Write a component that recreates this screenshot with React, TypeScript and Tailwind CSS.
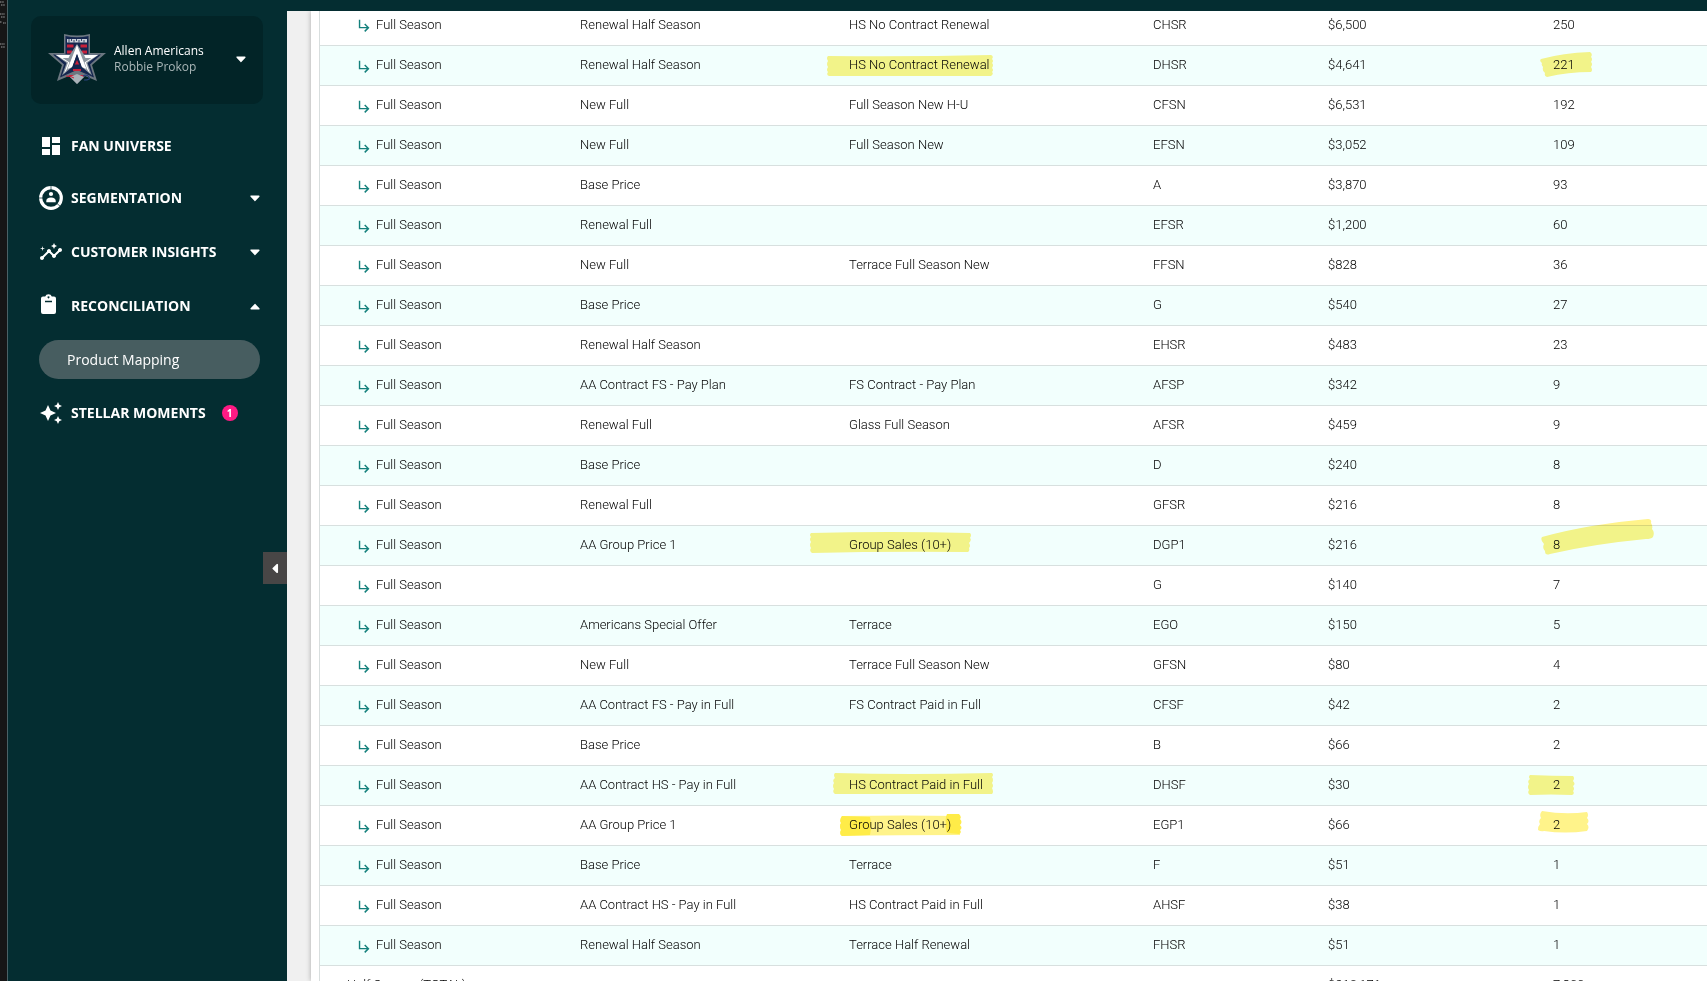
import React from "react";
import {
  MdAutoAwesome,
  MdDashboard,
  MdInsights,
  MdSubdirectoryArrowRight,
} from "react-icons/md";

type Stroke = { d: string; color?: string };
type Row = {
  type: string;
  name: string;
  code: string;
  revenue: string;
  count: string;
  nameMark?: Stroke[];
  countMark?: Stroke[];
};

const YELLOW = "#fff38a";
const DEEP = "#ffec48";

const row = (
  type: string,
  name: string,
  code: string,
  revenue: string,
  count: string,
  nameMark?: Stroke[],
  countMark?: Stroke[],
): Row => ({ type, name, code, revenue, count, nameMark, countMark });

const rows: Row[] = [
  row("Renewal Half Season", "HS No Contract Renewal", "CHSR", "$6,500", "250"),
  row(
    "Renewal Half Season",
    "HS No Contract Renewal",
    "DHSR",
    "$4,641",
    "221",
    [{ d: "M-21 10 Q60 11 142 9 Q145 10 143 13 Q145 15 143 17 Q145 19 143 22 Q145 24 143 26 Q145 28 142 30 Q60 30 -20 30 Q-23 29 -21 26 Q-23 24 -21 21 Q-23 18 -21 15 Q-23 12 -21 10Z" }],
    [{ d: "M-12 13 Q10 7 37 6 Q40 8 38 11 Q40 13 38 16 Q40 18 38 21 Q40 24 38 26 Q15 26 -6 31 Q-9 30 -8 27 Q-11 25 -10 21 Q-12 19 -11 17 Q-14 15 -12 13Z" }],
  ),
  row("New Full", "Full Season New H-U", "CFSN", "$6,531", "192"),
  row("New Full", "Full Season New", "EFSN", "$3,052", "109"),
  row("Base Price", "", "A", "$3,870", "93"),
  row("Renewal Full", "", "EFSR", "$1,200", "60"),
  row("New Full", "Terrace Full Season New", "FFSN", "$828", "36"),
  row("Base Price", "", "G", "$540", "27"),
  row("Renewal Half Season", "", "EHSR", "$483", "23"),
  row("AA Contract FS - Pay Plan", "FS Contract - Pay Plan", "AFSP", "$342", "9"),
  row("Renewal Full", "Glass Full Season", "AFSR", "$459", "9"),
  row("Base Price", "", "D", "$240", "8"),
  row("Renewal Full", "", "GFSR", "$216", "8"),
  row(
    "AA Group Price 1",
    "Group Sales (10+)",
    "DGP1",
    "$216",
    "8",
    [{ d: "M-38 7 Q40 5 121 7 Q123 9 121 12 Q123 14 120 17 Q122 20 120 22 Q121 25 119 26 Q40 25 -37 27 Q-40 25 -38 22 Q-40 19 -38 16 Q-40 13 -38 11 Q-40 9 -38 7Z" }],
    [{ d: "M-11 11 Q36 -2 95 -7 Q99 -7 98 -3 Q100 0 99 3 Q102 6 100 11 Q98 13 93 13 Q40 18 -3 28 Q-8 30 -8 25 Q-11 22 -9 18 Q-13 14 -11 11Z" }],
  ),
  row("", "", "G", "$140", "7"),
  row("Americans Special Offer", "Terrace", "EGO", "$150", "5"),
  row("New Full", "Terrace Full Season New", "GFSN", "$80", "4"),
  row("AA Contract FS - Pay in Full", "FS Contract Paid in Full", "CFSF", "$42", "2"),
  row("Base Price", "", "B", "$66", "2"),
  row(
    "AA Contract HS - Pay in Full",
    "HS Contract Paid in Full",
    "DHSF",
    "$30",
    "2",
    [{ d: "M-14 7 Q60 9 143 7 Q145 9 143 11 Q145 14 143 17 Q145 20 143 22 Q145 26 143 28 Q60 28 -14 28 Q-17 26 -15 23 Q-17 20 -15 17 Q-17 14 -14 12 Q-16 9 -14 7Z" }],
    [{ d: "M-23 9 Q0 10 20 10 Q22 12 20 15 Q23 18 20 20 Q22 23 20 25 Q22 28 19 29 Q-2 28 -23 29 Q-26 27 -24 24 Q-26 21 -24 18 Q-26 15 -23 13 Q-25 11 -23 9Z" }],
  ),
  row(
    "AA Group Price 1",
    "Group Sales (10+)",
    "EGP1",
    "$66",
    "2",
    [
      { d: "M-7 10 Q60 9 110 10 L111 29 Q50 29 -7 30 Q-10 28 -8 24 Q-10 20 -8 17 Q-10 14 -7 10Z" },
      { d: "M-7 10 L21 11 Q23 18 21 29 L-7 30 Q-10 28 -8 24 Q-10 20 -8 17 Q-10 14 -7 10Z", color: DEEP },
      { d: "M98 8 L110 8 Q113 11 111 13 Q114 16 111 19 Q114 22 111 24 Q113 27 110 28 L98 27 Q96 23 97 18 Q96 12 98 8Z", color: DEEP },
    ],
    [{ d: "M-11 5 Q12 9 34 6 Q36 9 34 12 Q37 15 34 18 Q37 21 34 25 Q12 28 -9 25 Q-12 26 -15 24 Q-15 20 -13 18 Q-15 15 -12 12 Q-14 8 -11 5Z" }],
  ),
  row("Base Price", "Terrace", "F", "$51", "1"),
  row("AA Contract HS - Pay in Full", "HS Contract Paid in Full", "AHSF", "$38", "1"),
  row("Renewal Half Season", "Terrace Half Renewal", "FHSR", "$51", "1"),
];

function Marker({ strokes }: { strokes: Stroke[] }) {
  return (
    <svg aria-hidden="true" className="pointer-events-none absolute left-0 top-0 size-px overflow-visible mix-blend-multiply">
      {strokes.map((s) => (
        <path key={s.d} d={s.d} fill={s.color ?? YELLOW} />
      ))}
    </svg>
  );
}

function Caret({ className }: { className: string }) {
  return (
    <svg viewBox="0 0 10 7" className={`h-[7px] w-[10px] shrink-0 ${className}`} aria-hidden="true">
      <path d="M1.200 1.200 H8.800 L5 5.300Z" fill="currentColor" stroke="currentColor" strokeWidth="1.600" strokeLinejoin="round" />
    </svg>
  );
}

function TeamLogo() {
  return (
    <svg viewBox="0 0 58 50" className="h-[50px] w-[58px] shrink-0" aria-hidden="true">
      <path d="M16 0 Q29 3 42 0 V19 H58 L44 31 L49 47 L37 42 L29 50 L21 42 L9 47 L14 31 L0 19 H16Z" fill="#6c7780" />
      <path d="M17.500 2 Q29 4.500 40.500 2 V20.500 H53 L42 30.500 L46 43.500 L29 36 L12 43.500 L16 30.500 L5 20.500 H17.500Z" fill="#14264f" />
      <path d="M19 5 H39 V8.500 H19Z" fill="#c9d0d8" />
      <path d="M21 5v3.500M23.500 5v2M26 6v2.500M28.500 5v2M31 6v2.500M33.500 5v2M36 6v2.500" stroke="#14264f" strokeWidth=".8" />
      <path d="M19 10.500h6.500v3H19zM32.500 10.500h6.500v3h-6.500zM19 16.500h5v3h-5zM34 16.500h5v3h-5z" fill="#c8203a" />
      <path d="M7 20.500 H22 L29 10 L36 20.500 H51 L39.500 29 L44 41.500 L35 34 L29 19 L23 34 L14 41.500 L18.500 29Z" fill="#8c969f" />
      <path d="M8 21 H22 L20.500 24 H14.500 L21.500 28.500 L18.500 36 L16 39.500 L20 28.500Z M50 21 H36 L37.500 24 H43.500 L36.500 28.500 L39.500 36 L42 39.500 L38 28.500Z" fill="#fff" />
      <path d="M29 11 L38.500 35 L33.500 33 L29 20 L24.500 33 L19.500 35Z" fill="#fff" />
      <path d="M29 20 L34.500 35 H23.500Z" fill="#14264f" />
      <path d="M29 26 l2.200 4.500h-4.400zM25 35h8v2h-8zM21 41h15v1.800H21z" fill="#c8203a" />
      <path d="M22 43 L29 40 L36 43 L29 50Z" fill="#a9b1b8" />
      <path d="M35 42q4-2 6 1t-5 3" fill="none" stroke="#27407a" strokeWidth="1.200" />
      <path d="M18 42q5 0 8 2" fill="none" stroke="#c8203a" strokeWidth="1" />
    </svg>
  );
}

function SegmentationIcon() {
  return (
    <svg viewBox="0 0 24 24" className="size-6" aria-hidden="true">
      <circle cx="12" cy="12" r="10.300" fill="none" stroke="currentColor" strokeWidth="3.200" />
      <path d="M12 0v4M0 12h4M18 17.500l3.500 3" stroke="#042d31" strokeWidth=".7" />
      <circle cx="12" cy="8" r="2.100" fill="currentColor" />
      <path d="M7.300 16.200 V14.800 Q7.300 11.600 12 11.400 Q16.700 11.600 16.700 14.800 V16.200Z" fill="currentColor" />
    </svg>
  );
}

function ClipboardIcon() {
  return (
    <svg viewBox="0 0 24 24" className="size-6" aria-hidden="true">
      <path
        fillRule="evenodd"
        fill="currentColor"
        d="M4 2.500 H6.200 Q7 .3 9.500 .3 Q12 .3 12.800 2.500 H15 Q17 2.500 17 4.500 V18 Q17 20 15 20 H4 Q2 20 2 18 V4.500 Q2 2.500 4 2.500Z M9.500 2.300 a1 1 0 1 0 .01 0Z M6 6.800 H13 V8.200 H6Z"
      />
    </svg>
  );
}

function NavItem({ icon, label, caret, badge }: { icon: React.ReactNode; label: string; caret?: "up" | "down"; badge?: string }) {
  return (
    <button type="button" className="flex h-10 w-full items-center pl-2 text-left text-white">
      <span className="flex w-8 shrink-0">{icon}</span>
      <span className="whitespace-nowrap text-sm font-bold">{label}</span>
      {badge && (
        <span className="ml-4 flex size-4 items-center justify-center rounded-full bg-[#ff1a84] text-[10px] font-bold leading-4">{badge}</span>
      )}
      {caret === "down" && <Caret className="ml-auto" />}
      {caret === "up" && <Caret className="ml-auto rotate-180" />}
    </button>
  );
}

function Sidebar() {
  return (
    <aside className="relative w-[279px] shrink-0 bg-[#042d31] pl-[23px] pr-6 font-['Open_Sans',sans-serif]">
      <button type="button" className="mt-[5px] flex h-[88px] w-full items-center rounded-[10px] bg-[#022427] pb-0.5 pl-[17px] pr-[17px] text-left">
        <TeamLogo />
        <span className="ml-2 flex flex-col whitespace-nowrap text-xs leading-4">
          <span className="text-white">Allen Americans</span>
          <span className="text-[#a9b6b7]">Robbie Prokop</span>
        </span>
        <Caret className="ml-auto text-white" />
      </button>
      <nav className="mt-[22px] flex flex-col pr-[3px]">
        <NavItem icon={<MdDashboard className="size-6" />} label="FAN UNIVERSE" />
        <div className="mt-3">
          <NavItem icon={<SegmentationIcon />} label="SEGMENTATION" caret="down" />
        </div>
        <div className="mt-[14px]">
          <NavItem icon={<MdInsights className="size-6" />} label="CUSTOMER INSIGHTS" caret="down" />
        </div>
        <div className="mt-[14px]">
          <NavItem icon={<ClipboardIcon />} label="RECONCILIATION" caret="up" />
        </div>
        <a href="#product-mapping" className="ml-2 mt-[14px] flex h-[39px] items-center rounded-full bg-[#475d60] pl-7 text-sm text-white">
          Product Mapping
        </a>
        <div className="mt-[14px]">
          <NavItem icon={<MdAutoAwesome className="size-6" />} label="STELLAR MOMENTS" badge="1" />
        </div>
      </nav>
      <button
        type="button"
        aria-label="Collapse sidebar"
        className="absolute right-0 top-[541px] flex h-8 w-6 items-center justify-center bg-[#484646] text-white"
      >
        <Caret className="rotate-90" />
      </button>
    </aside>
  );
}

function ProductTable() {
  return (
    <table className="-mt-1.5 w-full table-fixed border-collapse text-left text-[13px] font-light leading-4 text-black">
      <colgroup>
        <col className="w-[260px]" />
        <col className="w-[269px]" />
        <col className="w-[304px]" />
        <col className="w-[175px]" />
        <col className="w-[225px]" />
        <col className="w-[154px]" />
      </colgroup>
      <tbody>
        {rows.map((r, i) => (
          <tr key={i} className="h-10 border-b border-[#d8e0df] odd:bg-white even:bg-[#f2fffd]">
            <td className="p-0 pl-9">
              <span className="flex items-center gap-[3px]">
                <MdSubdirectoryArrowRight className="mt-0.5 size-[17px] text-[#14807c]" />
                Full Season
              </span>
            </td>
            <td className="p-0">{r.type}</td>
            <td className="relative p-0">
              {r.name}
              {r.nameMark && <Marker strokes={r.nameMark} />}
            </td>
            <td className="p-0">{r.code}</td>
            <td className="p-0">{r.revenue}</td>
            <td className="relative p-0">
              {r.count}
              {r.countMark && <Marker strokes={r.countMark} />}
            </td>
          </tr>
        ))}
        <tr className="h-10 bg-white">
          <td className="p-0 pl-[27px]">Half Season (TOTAL)</td>
          <td />
          <td />
          <td />
          <td className="p-0">$210,171</td>
          <td className="p-0">7,309</td>
        </tr>
      </tbody>
    </table>
  );
}

export default function App() {
  return (
    <div className="flex h-screen overflow-hidden bg-[#042d31]">
      <div className="w-2 shrink-0 border-r border-[#4a6266] bg-[#161616]">
        <svg viewBox="0 0 7 50" className="h-[50px] w-[7px]" aria-hidden="true">
          <path d="M0 2h4M1 5h4M0 14h5M1 17h4M0 22h2M3 23h3M0 44h5M1 47h4" stroke="#5a5a5a" strokeWidth="2" strokeDasharray="1.500 .7" />
        </svg>
      </div>
      <div className="flex min-w-0 flex-1 flex-col">
        <header className="h-[11px] shrink-0 bg-[#042d31]" />
        <div className="flex min-h-0 flex-1">
          <Sidebar />
          <main className="min-w-0 flex-1 overflow-hidden bg-[#f0f0f0] pl-6 font-[Roboto,sans-serif]">
            <section className="h-full bg-white pl-2 shadow-[0_0_5px_rgba(0,0,0,0.3)]">
              <div className="h-full overflow-hidden border-l border-[#d8dede]">
                <ProductTable />
              </div>
            </section>
          </main>
        </div>
      </div>
    </div>
  );
}
